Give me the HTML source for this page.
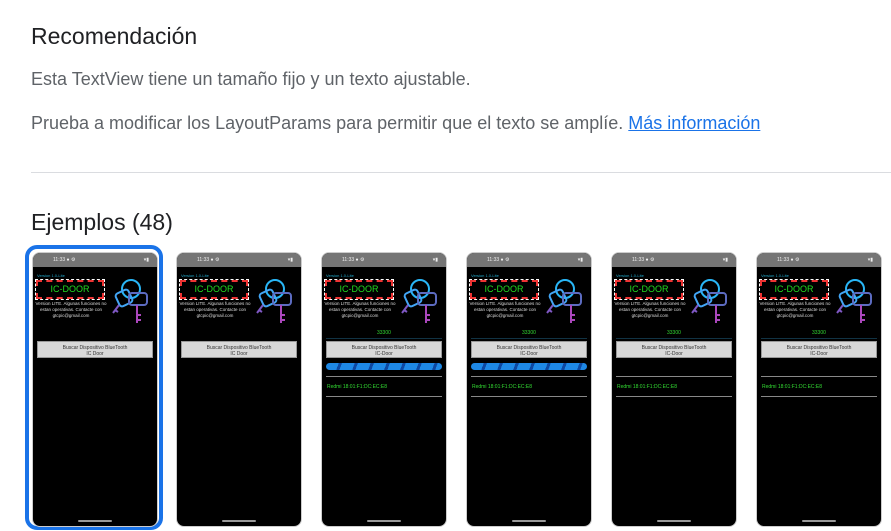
<html><head><style>
body{margin:0;width:891px;height:531px;background:#fff;font-family:"Liberation Sans",sans-serif;overflow:hidden;position:relative}
.a{position:absolute}
h2{position:absolute;left:31px;top:23px;margin:0;font-size:23px;font-weight:400;color:#202124}
.p{position:absolute;left:31px;font-size:18px;color:#5f6368}
.ph{position:absolute;top:252px;width:124px;height:273px;background:#000;border:1px solid #ccc;border-radius:8px;overflow:hidden}
.sb{height:14px;background:#757575;color:#eee;font-size:5px;line-height:14px;padding-left:20px}
.ver{position:absolute;left:4px;top:20px;font-size:4px;color:#2ac}
.box{position:absolute;left:3px;top:27px;width:64px;height:15px;border:2px dashed #e33;outline:1px dashed #fff;color:#2d2;font-size:9px;text-align:center;line-height:15px}
.t{position:absolute;left:2px;top:48px;width:72px;font-size:4.5px;color:#ddd;text-align:center;line-height:6px}
.btn{position:absolute;left:4px;top:88px;width:116px;height:17px;background:#d8d8d8;border:1px solid #999;font-size:5px;color:#333;text-align:center;line-height:6px;padding-top:3px;box-sizing:border-box}
.ln{position:absolute;left:4px;width:116px;height:1px;background:#888}
.g{position:absolute;color:#3d3;font-size:5px}
.pb{position:absolute;left:4px;top:110px;width:116px;height:7px;border-radius:4px;background:repeating-linear-gradient(110deg,#1e88e5 0 12px,#0d47a1 12px 15px)}
.hm{position:absolute;left:45px;bottom:4px;width:34px;height:2px;background:#999;border-radius:1px}
</style></head><body>
<h2>Recomendación</h2>
<div class="p" style="top:69px">Esta TextView tiene un tamaño fijo y un texto ajustable.</div>
<div class="p" style="top:113px">Prueba a modificar los LayoutParams para permitir que el texto se amplíe. <span style="color:#1a73e8;text-decoration:underline">Más información</span></div>
<div class="a" style="left:31px;top:172px;width:860px;height:1px;background:#dadce0"></div>
<div class="a" style="left:31px;top:209px;font-size:23px;color:#202124">Ejemplos (48)</div>
<div class="a" style="left:25px;top:245px;width:130px;height:277px;border:4px solid #1a73e8;border-radius:12px"></div>
<svg width="0" height="0" style="position:absolute"><defs><g id="k" fill="none" stroke-width="2"><circle cx="20" cy="12" r="9" stroke="#29b6f6"/><rect x="6" y="14" width="14" height="14" rx="3" stroke="#42a5f5" transform="rotate(-25 13 21)"/><rect x="18" y="16" width="18" height="12" rx="3" stroke="#5c6bc0"/><path d="M8 28 L2 36 M4 33 L7 35" stroke="#7e57c2"/><path d="M26 28 V46 M26 38 h4 M26 43 h4" stroke="#ab47bc"/></g></defs></svg>
<div id="c"></div>
<script>
var xs=[32,176,321,466,611,756],h='';
xs.forEach(function(x,i){
var s='<div class="ph" style="left:'+x+'px"><div class="sb">11:33 ● ⚙'+'<span style="float:right;padding-right:8px">▾▮</span></div>'+
'<div class="ver">Version 1.0-Lite</div><div class="box">IC-DOOR</div>'+
'<svg style="position:absolute;left:78px;top:24px" width="42" height="50"><use href="#k"/></svg>'+
'<div class="t">Version LITE. Algunas funciones no estan operativas. Contacte con gtcpic@gmail.com</div>';
if(i<2){s+='<div class="btn">Buscar Dispositivo BlueTooth<br>IC Door</div>';}
else{s+='<div class="g" style="left:55px;top:77px">33300</div><div class="ln" style="top:85px;background:#134"></div><div class="btn">Buscar Dispositivo BlueTooth<br>IC-Door</div>';
if(i<4)s+='<div class="pb"></div>';
s+='<div class="ln" style="top:123px"></div><div class="g" style="left:5px;top:131px">Redmi 18:01:F1:DC:EC:E8</div><div class="ln" style="top:143px"></div>';}
s+='<div class="hm"></div></div>';h+=s;});
document.getElementById('c').innerHTML=h;
</script>
</body></html>
